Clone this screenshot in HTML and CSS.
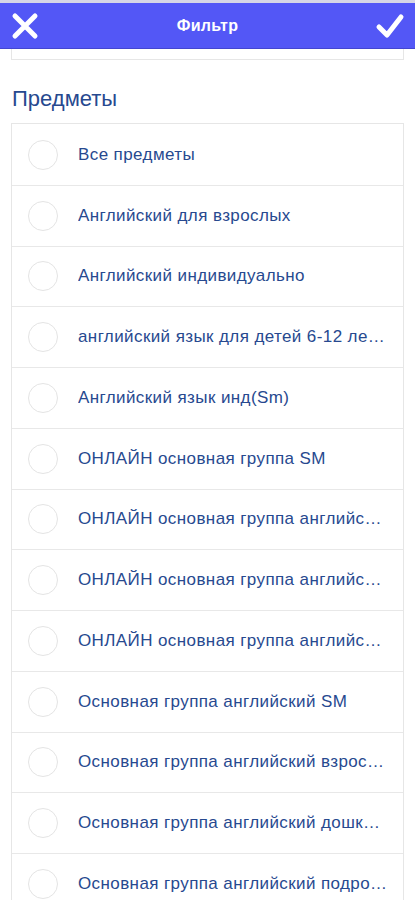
FILE: index.html
```html
<!DOCTYPE html>
<html lang="ru">
<head>
  <meta charset="UTF-8">
  <title>Фильтр</title>
  <link rel="stylesheet" href="styles.css">
</head>
<body>
  <div class="topline"></div>
  <header class="bar">
    <button class="bar-btn" aria-label="Закрыть">
      <svg width="28" height="28" viewBox="0 0 28 28"><path d="M4 4 L24 24 M24 4 L4 24" stroke="#fff" stroke-width="5" stroke-linecap="round"/></svg>
    </button>
    <div class="bar-title">Фильтр</div>
    <button class="bar-btn" aria-label="Готово">
      <svg width="30" height="28" viewBox="0 0 30 28"><path d="M4 15 L12 23 L26 5" fill="none" stroke="#fff" stroke-width="5" stroke-linecap="round" stroke-linejoin="round"/></svg>
    </button>
  </header>

  <main class="content">
    <div class="card card-prev"></div>

    <h2 class="section-title">Предметы</h2>

    <div class="card list">
      <label class="row"><span class="radio"></span><span class="row-text">Все предметы</span></label>
      <label class="row"><span class="radio"></span><span class="row-text">Английский для взрослых</span></label>
      <label class="row"><span class="radio"></span><span class="row-text">Английский индивидуально</span></label>
      <label class="row"><span class="radio"></span><span class="row-text">английский язык для детей 6-12 ле…</span></label>
      <label class="row"><span class="radio"></span><span class="row-text">Английский язык инд(Sm)</span></label>
      <label class="row"><span class="radio"></span><span class="row-text">ОНЛАЙН основная группа SM</span></label>
      <label class="row"><span class="radio"></span><span class="row-text">ОНЛАЙН основная группа английс…</span></label>
      <label class="row"><span class="radio"></span><span class="row-text">ОНЛАЙН основная группа английс…</span></label>
      <label class="row"><span class="radio"></span><span class="row-text">ОНЛАЙН основная группа английс…</span></label>
      <label class="row"><span class="radio"></span><span class="row-text">Основная группа английский SM</span></label>
      <label class="row"><span class="radio"></span><span class="row-text">Основная группа английский взрос…</span></label>
      <label class="row"><span class="radio"></span><span class="row-text">Основная группа английский дошк…</span></label>
      <label class="row"><span class="radio"></span><span class="row-text">Основная группа английский подро…</span></label>
    </div>
  </main>
</body>
</html>
```

FILE: styles.css
```css
body {
  margin: 0;
  background-color: #fff;
  font-family: 'Liberation Sans', Arial, sans-serif;
  color: #27498f;
  overflow: hidden;
}
.topline {
  height: 3px;
  background-color: #d6d6e6;
}
.bar {
  height: 45px;
  background-color: #5357f6;
  border-bottom: 1px solid #4346d0;
  display: flex;
  align-items: center;
  justify-content: space-between;
  padding: 0 10px;
}
.bar-btn {
  background: none;
  border: none;
  padding: 0;
  width: 30px;
  height: 30px;
  display: flex;
  align-items: center;
  justify-content: center;
}
.bar-title {
  color: #fff;
  font-size: 16px;
  font-weight: bold;
  letter-spacing: 0.3px;
}
.content {
  padding: 0 11px 0 11px;
}
.card {
  background-color: #fff;
  border: 1px solid #e6e6e6;
}
.card-prev {
  height: 10px;
  border-top: none;
}
.section-title {
  margin: 0;
  padding: 26px 0 11px 1px;
  font-size: 22px;
  font-weight: normal;
  color: #27498f;
}
.list {
  padding-top: 1px;
}
.row {
  height: 59.75px;
  display: flex;
  align-items: center;
  border-bottom: 1px solid #e8e8e8;
  padding: 0 12px 0 16px;
}
.radio {
  flex: none;
  width: 30px;
  height: 30px;
  border-radius: 50%;
  border: 1px solid #e4e4e4;
  box-sizing: border-box;
  margin-right: 20px;
}
.row-text {
  font-size: 17px;
  letter-spacing: 0.4px;
  white-space: nowrap;
  overflow: hidden;
  text-overflow: ellipsis;
}
```
